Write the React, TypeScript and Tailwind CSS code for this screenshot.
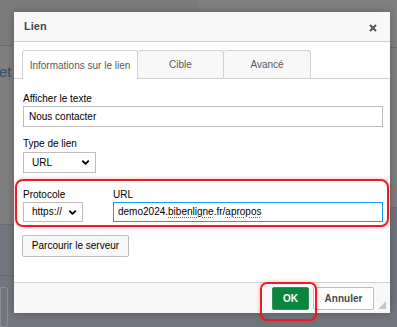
import { ChevronDown } from "lucide-react";

export default function App() {
  return (
    <div
      className="relative w-[397px] h-[327px] overflow-hidden bg-[#7b7b7b]"
      style={{ fontFamily: '"Liberation Sans", Arial, sans-serif' }}
    >
      {/* page behind the overlay */}
      <div className="flex h-full">
        <div className="w-1/2 flex flex-col">
          <div className="h-[48px] border-b border-[#6c6c6c] bg-[#7b7b7b]" />
          <div className="h-[184px] border-b border-[#6c6c6c] bg-[#7e7e7e] pt-[14px] overflow-hidden">
            <span className="-ml-[1px] text-[15px] leading-[16px] text-[#34516f]">et</span>
          </div>
          <div className="h-[53px] border-b border-[#686a72] bg-[#73767e]" />
          <div className="flex-1 bg-[#72757d] pt-[11px]">
            <div className="w-[8px] h-[40px] border border-[#8d8f96] rounded-r-[3px]" />
          </div>
        </div>
        <div className="w-1/2 flex flex-col">
          <div className="h-[48px] border-b border-[#6c6c6c] bg-[#808080]" />
          <div className="h-[160px] border-b border-[#6c6c6c] bg-[#7e7e7e]" />
          <div className="flex-1 bg-[#72757d]" />
        </div>
      </div>

      {/* dialog */}
      <div className="absolute left-[14px] top-[12px] w-[376px] h-[301px] bg-white flex flex-col shadow-[0_0_8px_rgba(0,0,0,0.25)]">
        <div className="h-[30px] shrink-0 flex items-center justify-between bg-[#f8f8f8] border-b border-[#d1d1d1] pl-[10px] pr-[13px]">
          <span className="text-[11px] font-bold text-[#484848]">Lien</span>
          <svg width="8" height="8" viewBox="0 0 8 8" className="mt-[2px]">
            <path d="M1 1L7 7M7 1L1 7" stroke="#555" strokeWidth="2" />
          </svg>
        </div>

        <div className="flex-1 flex flex-col">
          <div className="mt-[8px] flex border-b border-[#d1d1d1] pl-[8px] text-[10px] text-[#595959]">
            <div className="w-[116px] h-[29px] -mb-px flex items-center justify-center border border-b-0 border-[#d1d1d1] rounded-t-[3px] bg-white">
              Informations sur le lien
            </div>
            <div className="w-[86px] h-[28px] flex items-center justify-center border border-l-0 border-b-0 border-[#d1d1d1] rounded-t-[3px] bg-[#f8f8f8]">
              Cible
            </div>
            <div className="w-[87px] h-[28px] flex items-center justify-center border border-l-0 border-b-0 border-[#d1d1d1] rounded-t-[3px] bg-[#f8f8f8]">
              Avancé
            </div>
          </div>

          <div className="pl-[9px] pr-[7px] text-[10px] leading-[14px] text-black">
            <div className="mt-[13px]">Afficher le texte</div>
            <div className="h-[21px] flex items-center border border-[#bcbcbc] pl-[5px]">
              Nous contacter
            </div>

            <div className="mt-[10px]">Type de lien</div>
            <div className="mt-px w-[73px] h-[21px] flex items-center justify-between border border-[#bcbcbc] bg-white pl-[8px] pr-[4px]">
              <span>URL</span>
              <ChevronDown size={11} strokeWidth={4} className="text-black" />
            </div>
          </div>

          <div className="mt-[6px] ml-px mr-px h-[48px] border-2 border-[#ec1c24] rounded-[8px] pl-[6px] pr-[4px] pt-[7px] shadow-[0_0_4px_rgba(236,28,36,0.35)] flex gap-[30px] text-[10px] leading-[14px] text-black">
            <div className="flex flex-col">
              <span>Protocole</span>
              <div className="w-[60px] h-[20px] flex items-center justify-between border border-[#bcbcbc] bg-white pl-[8px] pr-[4px]">
                <span>https://</span>
                <ChevronDown size={11} strokeWidth={4} />
              </div>
            </div>
            <div className="flex-1 flex flex-col">
              <span>URL</span>
              <div className="h-[20px] flex items-center border border-[#139ff7] pl-[4px]">
                <span>
                  demo2024.
                  <span className="underline decoration-dotted decoration-[#e33] underline-offset-2">bibenligne</span>
                  .fr/
                  <span className="underline decoration-dotted decoration-[#e33] underline-offset-2">apropos</span>
                </span>
              </div>
            </div>
          </div>

          <div className="mt-[5px] ml-[8px]">
            <button className="h-[22px] w-[107px] border border-[#bcbcbc] bg-[#f8f8f8] rounded-[2px] text-[10px] text-black">
              Parcourir le serveur
            </button>
          </div>
        </div>

        <div className="relative h-[31px] shrink-0 bg-[#f8f8f8] border-t border-[#d1d1d1] flex justify-end items-start pt-[4px] pr-[16px] gap-[4px]">
          <button className="w-[37px] h-[23px] bg-[#09863e] border border-[#388d5c] rounded-[2px] text-[10px] font-bold text-white">
            OK
          </button>
          <button className="w-[61px] h-[23px] bg-white border border-[#bcbcbc] rounded-[2px] text-[10px] font-bold text-[#484848]">
            Annuler
          </button>
          <svg width="8" height="8" viewBox="0 0 8 8" className="absolute right-[4px] bottom-[4px]">
            <path d="M8 0L8 8L0 8Z" fill="#c5c5c5" />
          </svg>
        </div>
      </div>

      {/* annotation around OK */}
      <div className="absolute left-[260px] top-[282px] w-[57px] h-[39px] border-2 border-[#ec1c24] rounded-[7px] shadow-[0_0_4px_rgba(236,28,36,0.35)]" />
    </div>
  );
}
